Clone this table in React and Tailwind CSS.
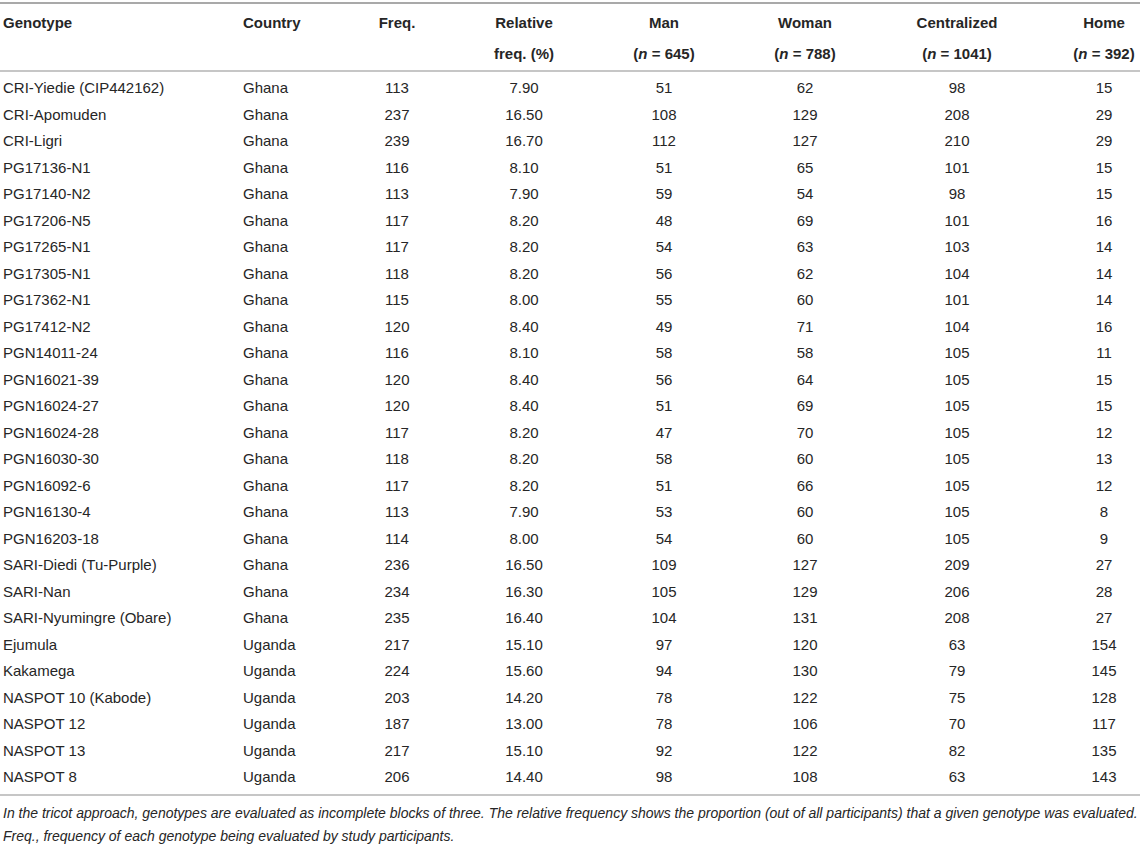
import React from 'react';

const rows = [
  ['CRI-Yiedie (CIP442162)', 'Ghana', '113', '7.90', '51', '62', '98', '15'],
  ['CRI-Apomuden', 'Ghana', '237', '16.50', '108', '129', '208', '29'],
  ['CRI-Ligri', 'Ghana', '239', '16.70', '112', '127', '210', '29'],
  ['PG17136-N1', 'Ghana', '116', '8.10', '51', '65', '101', '15'],
  ['PG17140-N2', 'Ghana', '113', '7.90', '59', '54', '98', '15'],
  ['PG17206-N5', 'Ghana', '117', '8.20', '48', '69', '101', '16'],
  ['PG17265-N1', 'Ghana', '117', '8.20', '54', '63', '103', '14'],
  ['PG17305-N1', 'Ghana', '118', '8.20', '56', '62', '104', '14'],
  ['PG17362-N1', 'Ghana', '115', '8.00', '55', '60', '101', '14'],
  ['PG17412-N2', 'Ghana', '120', '8.40', '49', '71', '104', '16'],
  ['PGN14011-24', 'Ghana', '116', '8.10', '58', '58', '105', '11'],
  ['PGN16021-39', 'Ghana', '120', '8.40', '56', '64', '105', '15'],
  ['PGN16024-27', 'Ghana', '120', '8.40', '51', '69', '105', '15'],
  ['PGN16024-28', 'Ghana', '117', '8.20', '47', '70', '105', '12'],
  ['PGN16030-30', 'Ghana', '118', '8.20', '58', '60', '105', '13'],
  ['PGN16092-6', 'Ghana', '117', '8.20', '51', '66', '105', '12'],
  ['PGN16130-4', 'Ghana', '113', '7.90', '53', '60', '105', '8'],
  ['PGN16203-18', 'Ghana', '114', '8.00', '54', '60', '105', '9'],
  ['SARI-Diedi (Tu-Purple)', 'Ghana', '236', '16.50', '109', '127', '209', '27'],
  ['SARI-Nan', 'Ghana', '234', '16.30', '105', '129', '206', '28'],
  ['SARI-Nyumingre (Obare)', 'Ghana', '235', '16.40', '104', '131', '208', '27'],
  ['Ejumula', 'Uganda', '217', '15.10', '97', '120', '63', '154'],
  ['Kakamega', 'Uganda', '224', '15.60', '94', '130', '79', '145'],
  ['NASPOT 10 (Kabode)', 'Uganda', '203', '14.20', '78', '122', '75', '128'],
  ['NASPOT 12', 'Uganda', '187', '13.00', '78', '106', '70', '117'],
  ['NASPOT 13', 'Uganda', '217', '15.10', '92', '122', '82', '135'],
  ['NASPOT 8', 'Uganda', '206', '14.40', '98', '108', '63', '143'],
];

// per-column cell alignment
const cellCls = [
  'text-left pl-[3px]',
  'text-left pl-[3px]',
  'text-center',
  'text-center',
  'text-center',
  'text-center',
  'text-center',
  'text-center pl-[40px]',
];

const N = ({ v }) => (
  <>
    (<span className="italic">n</span> = {v})
  </>
);

const headers = [
  ['Genotype', null],
  ['Country', null],
  ['Freq.', null],
  ['Relative', 'freq. (%)'],
  ['Man', <N v="645" />],
  ['Woman', <N v="788" />],
  ['Centralized', <N v="1041" />],
  ['Home', <N v="392" />],
];

export default function App() {
  return (
    <div className="w-[1143px] h-[848px] bg-white pt-[2px] text-[#262626] font-['Liberation_Sans',Arial,sans-serif]">
      <table className="table-fixed w-[1140px] border-collapse text-[15px]">
        <colgroup>
          <col className="w-[240px]" />
          <col className="w-[110px]" />
          <col className="w-[94px]" />
          <col className="w-[160px]" />
          <col className="w-[120px]" />
          <col className="w-[162px]" />
          <col className="w-[142px]" />
          <col className="w-[112px]" />
        </colgroup>
        <thead>
          <tr className="border-t-2 border-b-2 border-t-[#a9a9a9] border-b-[#c6c6c6]">
            {headers.map(([a, b], i) => (
              <th key={i} className={`${cellCls[i]} align-top font-bold leading-[31px] pt-[3px] pb-[1px] p-0`}>
                <div>{a}</div>
                <div>{b || '\u00a0'}</div>
              </th>
            ))}
          </tr>
        </thead>
        <tbody className="border-b-2 border-b-[#c6c6c6]">
          {rows.map((r, ri) => (
            <tr key={ri} className="h-[26.5px]">
              {r.map((c, ci) => (
                <td
                  key={ci}
                  className={`${cellCls[ci]} leading-[26.5px] ${ri === 0 ? 'pt-[3px]' : ''} ${ri === rows.length - 1 ? 'pb-[3px]' : ''}`}
                >
                  {c}
                </td>
              ))}
            </tr>
          ))}
        </tbody>
      </table>
      <div className="pl-[3px] pt-[6px] italic text-[14px] leading-[23px] w-[1140px]">
        <p>
          In the tricot approach, genotypes are evaluated as incomplete blocks of three. The relative frequency shows the proportion (out of all participants) that a given genotype was evaluated.
        </p>
        <p>Freq., frequency of each genotype being evaluated by study participants.</p>
      </div>
    </div>
  );
}
